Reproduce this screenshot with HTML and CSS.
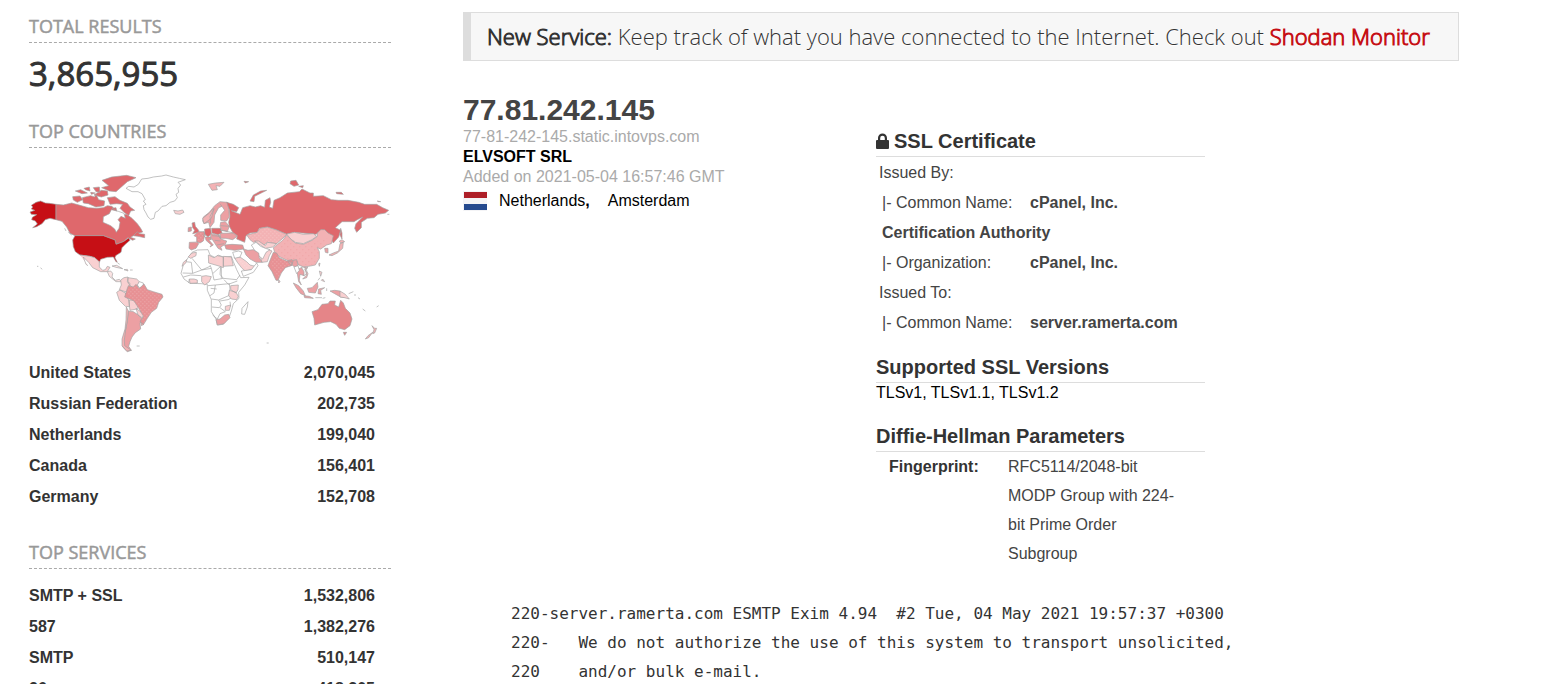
FILE: index.html
```html
<!DOCTYPE html>
<html lang="en">
<head>
<meta charset="utf-8">
<title>Search results</title>
<link rel="stylesheet" href="styles.css">
</head>
<body>
<div class="page">
<aside class="sidebar">
  <section class="facet">
    <h2 class="facet-title">TOTAL RESULTS</h2>
    <p class="total">3,865,955</p>
  </section>
  <section class="facet">
    <h2 class="facet-title">TOP COUNTRIES</h2>
    <svg class="map" viewBox="27 0 1086 570" role="img" aria-label="World map of results">
      <defs>
        <pattern id="dots" width="12" height="12" patternUnits="userSpaceOnUse"><path d="M1 1h3v3h-3zM7 7h3v3h-3z" fill="#fff" fill-opacity=".25"/></pattern>
        <pattern id="specks" width="18" height="18" patternUnits="userSpaceOnUse"><path d="M1 1h3v3h-3zM10 10h3v3h-3z" fill="#d9484d" fill-opacity=".18"/></pattern>
      </defs>
      <g class="land">
        <!-- North America -->
        <path class="c9" d="M108 118 88 115 76 114 62 108 48 112 34 121 38 126 34 132 44 136 30 141 34 148 50 149 37 157 35 164 46 168 52 177 38 188 50 185 66 176 76 164 90 160 108 164Z"/>
        <path class="c7" d="M108 118 130 120 155 114 180 121 205 128 230 130 250 128 262 122 276 124 290 140 300 150 320 148 336 160 352 176 362 190 368 201 348 207 332 217 346 222 338 226 324 218 310 230 288 238 285 225 250 212 165 212 150 205 140 186 126 169 108 164Z"/>
        <path class="water" d="M274 134 268 146 250 155 249 172 272 182 284 192 289 202 297 190 300 172 294 164 303 154 316 160 312 145 295 139Z"/>
        <path class="c7" d="M262 98 285 95 300 106 322 115 330 126 344 136 332 138 326 152 312 142 300 130 308 118 290 116 270 118ZM246 46 275 36 320 31 348 38 322 50 304 66 288 80 268 78 245 68 266 62ZM187 98 212 92 224 96 228 88 236 104 254 108 252 122 228 126 205 116 190 114ZM158 95 180 93 188 104 172 112 160 105ZM192 70 208 66 210 78 196 74ZM220 68 238 66 240 82 228 80ZM166 78 182 74 202 84 186 86ZM222 90 244 76 262 78 264 90 244 96ZM276 130 288 128 290 138ZM212 82 226 84 214 88ZM340 212 352 200 358 206 374 208 374 218 354 214Z"/>
        <path class="c9" d="M165 212 250 212 285 225 288 238 310 230 326 219 330 226 316 238 306 248 303 262 287 272 285 278 292 292 288 290 280 276 262 277 242 283 238 292 224 278 210 274 180 270 166 260 160 245 158 225Z"/>
        <path class="c2" d="M180 270 210 274 224 278 238 290 238 306 248 316 256 314 262 304 270 307 262 320 242 320 218 308 206 292 190 276 198 298 204 302"/>
        <path class="c1" d="M262 320 272 318 278 325 276 336 286 346 298 343 304 350 288 350 268 334ZM276 303 290 301 308 311 288 307ZM312 314 322 313 324 318ZM330 315h8M134 190l4 8M145 202l10 8M62 308l4 5M51 304h4M293 294l6 4"/>
        <!-- South America -->
        <path class="c2" d="M302 345 312 338 324 336 322 350 330 355 328 370 322 382 298 374 304 360ZM324 338 350 342 358 350 350 366 336 368 324 354ZM290 382 300 375 316 384 320 395 328 408 328 425 316 424 298 406ZM326 406 342 404 358 425 350 432 330 436ZM348 430 364 442 372 450 366 458 354 450Z"/>
        <path class="water" d="M358 350 370 354 370 366 358 368 352 360Z"/>
        <path class="c4" d="M325 438 340 440 352 448 365 460 360 476 362 492 346 503 336 516 330 530 326 544 334 556 322 560 308 546 308 524 318 490 322 465ZM362 470 372 478 364 482ZM350 543h9"/>
        <path class="c3" d="M319 426 325 438 322 468 317 492 313 525 314 542 334 556 320 558 306 542 306 522 315 492 318 465Z"/>
        <path class="c5" d="M320 376 325 362 340 366 348 358 358 370 372 357 382 374 400 380 426 388 429 396 416 412 410 430 394 442 382 460 371 478 360 470 370 454 356 430 342 408 328 402 314 396Z"/>
        <!-- Greenland, Iceland and Svalbard -->
        <path class="c0" d="M318 70 326 64 342 66 355 58 365 42 384 40 400 36 425 33 438 30 460 36 478 40 496 44 474 52 482 60 474 70 476 82 468 88 472 98 464 108 450 112 438 122 426 124 414 138 406 142 402 160 392 163 384 156 378 144 372 134 370 122 378 118 370 108 376 104 366 86 354 80 336 80Z"/>
        <path class="c2" d="M461 136 474 138 488 135 492 142 480 148 466 146Z"/>
        <path class="c3" d="M565 58 586 54 612 52 600 64 588 62 592 74 576 76Z"/>
        <!-- Africa -->
        <path class="c0" d="M490 300 507 274 516 262 532 255 564 254 570 270 586 278 594 270 610 276 634 274 640 290 650 314 662 338 687 337 674 360 656 382 657 400 640 416 634 438 628 455 610 478 592 480 588 462 574 440 574 404 562 376 562 358 544 356 510 355 492 342 483 325Z"/>
        <path class="line" d="M497 290 514 292 518 325 488 324M516 280 545 315 570 304M518 325 545 315 574 310 570 300M574 310 578 326 602 304M602 304 600 328 610 340 650 344 660 330M578 326 582 345 610 340M564 362 586 360 628 356 630 372 626 392 596 405 574 402M586 360 582 384 570 392M596 405 604 420 598 428 576 426M600 408 624 404 636 398M600 428 616 440 600 446 592 462 578 450M604 304 604 340M490 336 512 330 544 332M508 342 506 354M630 410 632 425M572 370 590 372M612 344 625 358 652 348"/>
        <path class="c2" d="M505 275 516 264 529 262 528 272 512 280ZM565 270 582 278 592 272 610 276 610 308 600 304 566 294ZM610 274 634 276 640 302 610 304ZM545 334 558 332 574 335 568 350 554 360 545 350ZM508 342 522 342 532 345 532 354 510 355ZM632 362 655 360 654 374 648 384 632 374ZM628 376 648 382 655 394 650 404 634 402 626 392ZM616 424 632 420 628 436 616 436ZM486 304 490 292 500 284 498 293Z"/>
        <path class="c4" d="M588 464 600 462 614 450 626 448 630 458 612 476 592 480Z"/>
        <path class="c0" d="M684 410 682 426 674 448 665 447 666 430Z"/>
        <!-- Europe -->
        <path class="c7" d="M516 174 524 172 526 184 536 196 536 202 518 206 524 196 518 188ZM554 192 572 190 574 206 564 216 554 208ZM575 190 602 190 606 204 594 209 576 204Z"/>
        <path class="c5" d="M505 188 514 186 514 198 504 200ZM508 232 532 231 536 236 528 250 514 255 507 250ZM534 200 552 200 554 212 550 228 540 234 530 230 530 216 522 212ZM556 216 572 216 574 224 566 224 580 240 570 246 574 240 558 226ZM614 240 636 238 668 240 672 252 644 256 618 252Z"/>
        <path class="c4" d="M548 168 550 156 568 142 584 122 600 110 622 112 626 128 628 155 620 168 602 166 602 150 614 136 606 124 596 128 584 150 582 172 570 188 566 172 552 176ZM602 172 616 170 628 184 622 200 606 196 600 184Z"/>
        <path class="c4" d="M572 206 600 212 602 222 620 228 616 238 602 246 606 256 594 250 580 228 572 216ZM600 205 640 204 652 214 638 224 618 220 602 220Z"/>
        <path class="c3" d="M552 176 548 160 566 146 582 130 574 160Z"/>
        <path class="line" d="M582 132 570 154 572 176M600 116 606 124M602 182 628 184M600 196 618 198 640 204M576 212 598 214M584 226 602 228M590 240 612 236M552 200 556 212M594 209 600 220M548 208 554 216"/>
        <!-- Russia -->
        <path class="c7" d="M620 112 640 118 656 128 650 140 634 137 660 148 668 128 690 122 706 126 722 122 734 127 736 106 750 98 752 112 748 126 758 130 762 106 780 98 802 84 838 80 846 72 870 84 880 84 880 94 910 92 934 104 956 106 984 106 1016 112 1034 118 1070 118 1088 128 1106 136 1096 144 1074 148 1062 158 1042 160 1024 172 1024 188 1010 202 1004 190 1008 176 1028 156 1012 164 1002 170 966 170 946 188 962 196 956 216 940 234 928 216 906 194 888 208 870 206 822 202 800 208 770 195 742 186 718 190 712 202 690 204 678 212 674 232 650 222 652 212 638 202 628 184 626 172 630 154 628 134ZM690 108 700 90 722 78 740 76 728 82 704 94 702 110ZM812 48 828 46 836 60 822 64 810 56ZM836 64 850 62 848 68ZM948 82 964 82 970 88 950 86ZM672 49 686 50 676 54ZM962 190 966 204 966 222 960 210ZM1072 108 1082 110 1074 110ZM1102 148h6"/>
        <!-- Asia -->
        <path class="c3" d="M680 210 712 202 720 190 742 186 770 195 800 208 786 222 770 236 742 232 732 240 712 230 700 232 690 224Z"/>
        <path class="c2" d="M800 207 824 202 850 208 880 206 890 214 876 224 850 236 826 232 812 222ZM704 228 716 228 736 242 742 232 770 236 758 246 736 250 718 238ZM722 278 742 252 756 258 748 272 742 290 726 292Z"/>
        <path class="c0" d="M694 240 708 232 722 244 736 250 750 254 738 262 728 282 716 272 704 256Z"/>
        <path class="c3" d="M800 210 816 226 826 234 850 238 876 226 892 214 892 204 902 194 914 194 924 204 940 212 934 236 920 240 902 252 892 248 898 260 898 280 886 300 866 304 852 306 836 300 830 286 802 286 780 276 764 262 760 248 788 226Z"/>
        <path class="c5" d="M760 262 770 264 778 278 800 288 816 284 822 290 814 302 796 308 784 324 774 346 768 346 756 320 744 302 750 286Z"/>
        <path class="c4" d="M670 252 684 256 700 254 716 264 718 278 726 292 708 292 690 282 678 270ZM804 290 816 292 814 302ZM820 286 830 284 834 302 824 306 816 300ZM830 314 844 308 854 320 852 332 840 328 838 346 844 360 836 350ZM914 250 924 250 924 264 916 262Z"/>
        <path class="c2" d="M642 276 660 276 680 290 690 300 706 304 694 314 676 318 666 310 652 292Z"/>
        <path class="c0" d="M638 262 656 258 666 262 660 276 644 280ZM664 318 694 314 710 294 714 302 700 322 670 334ZM822 306 834 302 838 316 830 326ZM844 306 858 308 862 324 852 332 852 320Z"/>
        <path class="c3" d="M854 306 864 308 854 314 864 326 860 338 848 342 860 330ZM776 344l4 6-4 4zM896 296 900 294 898 304ZM927 270 940 264 956 258 960 236 970 232 968 250 952 264 936 272ZM958 228 966 224 974 230 962 234Z"/>
        <path class="c4" d="M820 354 836 362 850 378 856 392 842 386 828 368ZM862 370 876 368 892 352 894 366 886 384 866 382ZM896 372 914 368 902 376 904 388 894 386ZM852 392 868 394 880 400 854 398ZM886 398h20M908 400 916 398M930 378 944 376 960 378 976 398 962 396 944 386Z"/>
        <path class="c2" d="M960 378 976 388 988 402 974 398 960 396ZM898 318 906 322 902 334ZM908 342 914 350 904 346ZM900 338 894 346M986 386 1000 380M1002 390 1008 390M1014 398 1020 402M1028 432 1036 438M1070 426 1076 422M740 534h6M920 370v8"/>
        <!-- Oceania -->
        <path class="c6" d="M876 440 894 434 906 418 924 416 930 408 946 408 944 420 956 426 962 406 970 414 976 430 990 444 996 462 990 482 974 494 958 490 948 478 932 470 912 472 884 480 882 460ZM970 502 980 502 974 511Z"/>
        <path class="c3" d="M1056 482 1064 490 1070 490 1064 504 1058 506 1062 494ZM1058 502 1046 518 1036 522 1044 512Z"/>
      </g>
      <path fill="url(#dots)" d="M320 376 348 362 400 382 426 390 410 430 371 474 356 430 328 402ZM684 212 742 188 796 210 770 234 690 224ZM646 278 700 302 676 316ZM536 202 552 202 548 228 532 228ZM750 290 770 268 812 300 774 340Z"/>
      <path fill="url(#specks)" d="M764 248 800 214 850 240 934 216 898 260 886 300 836 300 780 274Z"/>
    </svg>
    <table class="counts">
      <tr><th scope="row"><a href="#">United States</a></th><td>2,070,045</td></tr>
      <tr><th scope="row"><a href="#">Russian Federation</a></th><td>202,735</td></tr>
      <tr><th scope="row"><a href="#">Netherlands</a></th><td>199,040</td></tr>
      <tr><th scope="row"><a href="#">Canada</a></th><td>156,401</td></tr>
      <tr><th scope="row"><a href="#">Germany</a></th><td>152,708</td></tr>
    </table>
  </section>
  <section class="facet">
    <h2 class="facet-title">TOP SERVICES</h2>
    <table class="counts services">
      <tr><th scope="row"><a href="#">SMTP + SSL</a></th><td>1,532,806</td></tr>
      <tr><th scope="row"><a href="#">587</a></th><td>1,382,276</td></tr>
      <tr><th scope="row"><a href="#">SMTP</a></th><td>510,147</td></tr>
      <tr><th scope="row"><a href="#">26</a></th><td>418,305</td></tr>
    </table>
  </section>
</aside>
<main class="results">
  <p class="notice"><b>New Service:</b> Keep track of what you have connected to the Internet. Check out <a href="#">Shodan Monitor</a></p>
  <article class="host">
    <div class="summary">
      <h1 class="ip"><a href="#">77.81.242.145</a></h1>
      <p class="muted">77-81-242-145.static.intovps.com</p>
      <p><a class="org" href="#">ELVSOFT SRL</a></p>
      <p class="muted">Added on 2021-05-04 16:57:46 GMT</p>
      <p class="place">
        <svg class="flag" viewBox="0 0 24 20" role="img" aria-label="Flag of the Netherlands"><path fill="#f4f4f6" d="M0 0h24v20H0z"/><path fill="#ae1f28" d="M1 1h23v6H1z"/><path fill="#254a8e" d="M1 13h23v6H1z"/></svg>
        <span class="country"><a href="#">Netherlands</a><b>,</b></span>
        <a href="#">Amsterdam</a>
      </p>
    </div>
    <div class="ssl">
      <h3 class="heading"><svg class="lock" viewBox="0 0 13 16" aria-hidden="true"><path d="M0 8q0-1 1-1h1V5a4.500 4.500 0 0 1 9 0v2h1q1 0 1 1v7q0 1-1 1H1q-1 0-1-1zM4.200 7h4.600V5a2.300 2.300 0 0 0-4.600 0z"/></svg>SSL Certificate</h3>
      <div class="cert">
        <p>Issued By:</p>
        <p class="field"><span class="key">|- Common Name:</span><b>cPanel, Inc. Certification Authority</b></p>
        <p class="field"><span class="key">|- Organization:</span><b>cPanel, Inc.</b></p>
        <p>Issued To:</p>
        <p class="field"><span class="key">|- Common Name:</span><b>server.ramerta.com</b></p>
      </div>
      <h3 class="heading">Supported SSL Versions</h3>
      <p class="versions">TLSv1, TLSv1.1, TLSv1.2</p>
      <h3 class="heading">Diffie-Hellman Parameters</h3>
      <dl class="params"><dt>Fingerprint:</dt><dd>RFC5114/2048-bit MODP Group with 224-bit Prime Order Subgroup</dd></dl>
    </div>
  </article>
  <pre class="banner">220-server.ramerta.com ESMTP Exim 4.94  #2 Tue, 04 May 2021 19:57:37 +0300
220-   We do not authorize the use of this system to transport unsolicited,
220    and/or bulk e-mail.</pre>
</main>
</div>
</body>
</html>
```
FILE: styles.css
```css
* { box-sizing: border-box; }
body, h1, h2, h3, p, dl, dd, pre { margin: 0; }
body {
  background: #fff;
  color: #000;
  font: 16px/20px "Liberation Sans", Arial, sans-serif;
}
a { color: inherit; text-decoration: none; }
.page { display: flex; gap: 72px; padding: 12px 84px 0 29px; }
.sidebar { flex: 0 0 362px; color: #333; }
.results { flex: 1; min-width: 0; }

.facet-title {
  padding: 2px 0 3px;
  border-bottom: 1px dashed #aaa;
  color: #999;
  font: 400 18px/25px "Open Sans", sans-serif;
  -webkit-text-stroke: 0.5px;
}
.total {
  padding: 9px 0 21px;
  color: #333;
  font: 400 33px/44px "Open Sans", sans-serif;
  -webkit-text-stroke: 1px;
}
.map { display: block; width: 100%; margin: 17px 0 2px; }
.land { fill: #fff; stroke: #a3a3a3; stroke-width: 2; stroke-linejoin: round; }
.c0, .water { fill: #fff; }
.line { fill: none; }
.c1 { fill: #fbe3e3; }
.c2 { fill: #f9d0d1; }
.c3 { fill: #f3b2b4; }
.c4 { fill: #eca0a3; }
.c5 { fill: #e79194; }
.c6 { fill: #e58588; }
.c7 { fill: #df686c; }
.c9 { fill: #c60f15; }

.counts { width: 346px; border-collapse: collapse; margin-bottom: 26px; }
.counts th, .counts td { padding: 0; font-weight: bold; line-height: 31px; text-align: left; }
.counts td { text-align: right; }
.services { margin-top: 11px; }

.notice {
  padding: 8px 16px;
  border: 1px solid #ddd;
  border-left-width: 8px;
  background: #f7f7f7;
  color: #333;
  font: 300 22px/31px "Open Sans", sans-serif;
  text-shadow: 0 1px 0 #fff;
}
.notice b, .notice a { font-weight: 300; -webkit-text-stroke: 1px; }
.notice a { color: #c60f15; }

.host { display: grid; grid-template-columns: 413fr 329fr 254fr; margin-top: 32px; }
.ip { color: #444; font-size: 30px; line-height: 34px; }
.muted { color: #aaa; }
.org { font-weight: bold; }
.place { display: flex; align-items: center; padding-top: 4px; }
.flag { width: 24px; height: 20px; }
.country { margin: 0 18px 0 12px; }

.ssl { margin-top: 35px; color: #444; }
.heading {
  display: flex;
  align-items: center;
  gap: 5px;
  padding-bottom: 2px;
  border-bottom: 1px solid #ddd;
  color: #333;
  font-size: 20px;
  line-height: 26px;
}
.lock { width: 13px; height: 16px; fill: #333; }
.cert { padding: 1px 3px 16px; line-height: 30px; }
.field { padding-left: 3px; }
.key { display: inline-block; width: 148px; }
.versions { margin-bottom: 20px; color: #000; }
.params { display: grid; grid-template-columns: 119px 1fr; padding: 0 20px 0 13px; color: #333; line-height: 29px; }
.params dt { font-weight: bold; }
.params dd { color: #444; }

.banner { margin: 31px 0 0 48px; color: #333; font: 16px/29px "DejaVu Sans Mono", monospace; }
```
